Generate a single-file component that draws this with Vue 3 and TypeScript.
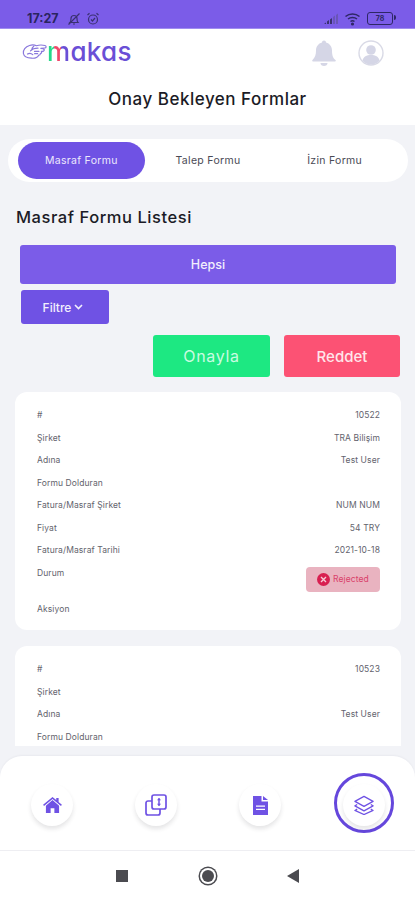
<script setup lang="ts">
interface Row { label: string; value?: string; status?: boolean }
const tabs = ['Masraf Formu', 'Talep Formu', 'İzin Formu']
const first: Row[] = [
  { label: '#', value: '10522' },
  { label: 'Şirket', value: 'TRA Bilişim' },
  { label: 'Adına', value: 'Test User' },
  { label: 'Formu Dolduran' },
  { label: 'Fatura/Masraf Şirket', value: 'NUM NUM' },
  { label: 'Fiyat', value: '54 TRY' },
  { label: 'Fatura/Masraf Tarihi', value: '2021-10-18' },
  { label: 'Durum', status: true },
  { label: 'Aksiyon' }
]
const second: Row[] = [
  { label: '#', value: '10523' },
  { label: 'Şirket' },
  { label: 'Adına', value: 'Test User' },
  { label: 'Formu Dolduran' }
]
const cards = [first, second]
</script>

<template>
  <div class="screen">
    <div class="status">
      <div class="status-left">
        <span class="time">17:27</span>
        <svg width="14" height="14" viewBox="0 0 14 14" fill="none" stroke="#3a3170" stroke-width="1.2">
          <path d="M3 10.5c1-1 1-2.500 1-4a3 3 0 0 1 6 0c0 1.500 0 3 1 4z" />
          <path d="M1.500 12.500 12.500 1.500M6 12h2" />
        </svg>
        <svg width="14" height="14" viewBox="0 0 14 14" fill="none" stroke="#3a3170" stroke-width="1.2">
          <circle cx="7" cy="7.500" r="4.500" />
          <path d="M5 7.500 6.500 9 9 6M1.500 3 3.500 1.300M12.500 3l-2-1.700" />
        </svg>
      </div>
      <div class="status-right">
        <svg width="16" height="12" viewBox="0 0 16 12">
          <path d="M1 11 3 9.500V11zM4 11V8.500L6 7v4zM7 11V6.500L9 5v6z" fill="#3a3170" />
          <path d="M10 11V4l2-1.500V11zM13 11V2l2-1.500V11z" fill="#6a55b8" />
        </svg>
        <svg width="18" height="14" viewBox="0 0 18 14" fill="none" stroke="#2e2766" stroke-width="1.500">
          <path d="M1.500 4.500c4-3.500 10-3.500 14 0M4 7c2.500-2 6.500-2 9 0M6.500 9.500c1-.8 3-.8 4 0" />
          <circle cx="8.500" cy="12" r=".8" fill="#2e2766" />
        </svg>
        <div class="battery"><span>78</span></div>
      </div>
    </div>

    <header class="header">
      <div class="brand-row">
        <div class="brand">
          <svg width="25" height="20" viewBox="0 0 25 20" fill="#fff" stroke="#8a78dc" stroke-width="1.200" stroke-linejoin="round" stroke-linecap="round">
            <path d="M7.500 2.500c2.500-.8 5-.6 7 .2 2.500-.8 6-.8 8.500-.2 1.500.4 1.500 2.400-.2 2.500l-4 .3c1.800.1 3.300.4 3.500 1.500.1 1.200-1.300 1.700-3 1.600.7.8.3 2-.9 2.300-.1.800-.7 1.400-1.700 1.500-1.200 2.300-4.200 3.300-7.200 3C5.500 15 2 13.800 1.400 10.500.8 7 3.500 3.700 7.500 2.500z" />
            <path d="M8.500 7.800c1.700-1.800 4.300-2.600 7.500-2.600M5.500 11c1.800-1.100 3.800-.8 5.300.6M11.800 3.200c-1.300.9-2 2.200-2.100 3.700M16.900 8.400h-4.400M15.600 10.700h-3" />
          </svg>
          <span class="wordmark"><span class="m">m</span>akas</span>
        </div>
        <div class="header-icons">
          <svg width="26" height="28" viewBox="0 0 26 28" fill="#d5d6e6">
            <path d="M13 1.500c1.200 0 2 .8 2 1.900 3.700 1 6 4 6 8.100 0 5 1 7.500 3.500 9.500.6.500.3 1.500-.5 1.500H2c-.8 0-1.100-1-.5-1.500C4 18.500 5 16 5 11.500c0-4.100 2.300-7.100 6-8.100 0-1.100.8-1.900 2-1.900z" />
            <path d="M9.500 24h7c0 1.800-1.500 3-3.500 3s-3.500-1.200-3.500-3z" />
          </svg>
          <svg width="26" height="26" viewBox="0 0 26 26">
            <circle cx="13" cy="13" r="12" fill="#fff" stroke="#d9dae6" stroke-width="1.400" />
            <circle cx="13" cy="10" r="4.800" fill="#d5d6e6" />
            <path d="M4.500 20.500c1-4 4-5.500 8.500-5.500s7.500 1.500 8.500 5.500C19.500 23.200 16.500 24.500 13 24.500s-6.500-1.300-8.500-4z" fill="#d5d6e6" />
          </svg>
        </div>
      </div>
      <h1 class="page-title">Onay Bekleyen Formlar</h1>
    </header>

    <main class="content">
      <nav class="tabs">
        <button v-for="(t, i) in tabs" :key="t" class="tab" :class="{ active: i === 0 }">{{ t }}</button>
      </nav>
      <h2 class="list-title">Masraf Formu Listesi</h2>
      <button class="all">Hepsi</button>
      <button class="filter">Filtre
        <svg width="9" height="6" viewBox="0 0 9 6" fill="none" stroke="#f2effd" stroke-width="1.600">
          <path d="M1 1l3.500 3.500L8 1" />
        </svg>
      </button>
      <div class="actions">
        <button class="act approve">Onayla</button>
        <button class="act reject">Reddet</button>
      </div>
      <section v-for="(card, c) in cards" :key="c" class="card">
        <div v-for="r in card" :key="r.label" class="row" :class="{ 'status-row': r.status }">
          <span class="lbl">{{ r.label }}</span>
          <span v-if="r.status" class="badge">
            <span class="badge-x">
              <svg width="7" height="7" viewBox="0 0 7 7" stroke="#f7c9d6" stroke-width="1.400"><path d="M1 1l5 5M6 1 1 6" /></svg>
            </span>
            Rejected
          </span>
          <span v-else-if="r.value" class="val">{{ r.value }}</span>
        </div>
      </section>
    </main>

    <div class="dock">
      <button class="dock-btn">
        <svg width="19" height="16" viewBox="0 0 20 17" fill="#6f52e4">
          <path d="M10 0 0 8.300l1 1.200L10 2l9 7.500 1-1.200-3.500-2.900V1h-2.500v2.300z" />
          <path d="M10 3.300 3 9.200V17h5v-5h4v5h5V9.200z" />
        </svg>
      </button>
      <button class="dock-btn">
        <svg width="22" height="22" viewBox="0 0 22 22" fill="none" stroke="#6f52e4" stroke-width="1.700">
          <rect x="7" y="1" width="14" height="14" rx="2" />
          <path d="M7 7H3a2 2 0 0 0-2 2v10a2 2 0 0 0 2 2h10a2 2 0 0 0 2-2v-4" />
          <path d="M14 4.500v7" stroke-width="1.500" />
          <path d="M14 3.800l2 2.500h-4zM14 12.200l2-2.500h-4z" fill="#6f52e4" stroke="none" />
        </svg>
      </button>
      <button class="dock-btn">
        <svg width="15" height="19" viewBox="0 0 15 19" fill="#6f52e4">
          <path d="M0 0h8.500v5.500H15V19H0zM10 0l5 4h-5z" />
          <path d="M3 9.500h9v1.300H3zM3 12.800h9v1.300H3z" fill="#fff" />
        </svg>
      </button>
      <div class="dock-active">
        <button class="dock-btn inner">
          <svg width="20" height="20" viewBox="0 0 22 22" fill="none" stroke="#6f52e4" stroke-width="1.400" stroke-linejoin="round">
            <path d="M11 1.500 21 7l-10 5.500L1 7z" />
            <path d="M3.500 10.500 1 12l10 5.500L21 12l-2.500-1.500" />
            <path d="M3.500 15.500 1 17l10 4.500L21 17l-2.500-1.500" />
          </svg>
        </button>
      </div>
    </div>

    <div class="navbar">
      <span class="nav-square"></span>
      <span class="nav-circle"></span>
      <span class="nav-back"></span>
    </div>
  </div>
</template>

<style scoped>
.screen {
  width: 415px;
  height: 900px;
  display: flex;
  flex-direction: column;
  overflow: hidden;
  background: #f2f3f7;
  font-family: Inter, "Open Sans", "Liberation Sans", sans-serif;
  color: #1d1d28;
}
button { font-family: inherit; border: none; padding: 0; }
.status {
  height: 29px;
  flex: none;
  background: #7b5ce8;
  border-bottom: 1px solid #a08df0;
  box-sizing: border-box;
  display: flex;
  justify-content: space-between;
  align-items: center;
  padding: 9px 22px 0 27px;
}
.status-left, .status-right { display: flex; align-items: center; gap: 5px; }
.time { font-size: 12.500px; font-weight: 700; color: #2a2460; margin-right: 3px; }
.battery {
  width: 24px;
  height: 11px;
  border: 1.500px solid #2e2766;
  border-radius: 3px;
  display: flex;
  align-items: center;
  justify-content: center;
  position: relative;
}
.battery::after {
  content: "";
  position: absolute;
  right: -4px;
  top: 2px;
  width: 2px;
  height: 5px;
  background: #2e2766;
  border-radius: 0 2px 2px 0;
}
.battery span { font-size: 7px; font-weight: 700; color: #2e2766; }
.header {
  flex: none;
  height: 96px;
  background: #fff;
  box-sizing: border-box;
  padding: 10px 31px 0 22px;
}
.brand-row { display: flex; justify-content: space-between; align-items: center; height: 28px; }
.brand { display: flex; align-items: center; }
.wordmark {
  font-feature-settings: "cv11";
  font-size: 26px;
  line-height: 28px;
  font-weight: 500;
  color: #6a4fd6;
  letter-spacing: 0.3px;
  margin-top: -2px;
}
.wordmark .m {
  background:
    linear-gradient(#f2c335, #f2c335) right bottom / 32% 18% no-repeat,
    linear-gradient(90deg, #25d98a 0 32%, #f0486a 32% 62%, #6a4fd6 62%);
  -webkit-background-clip: text;
  background-clip: text;
  color: transparent;
}
.header-icons { display: flex; align-items: center; gap: 21px; }
.page-title {
  margin: 20px 0 0 -22px;
  width: 415px;
  text-align: center;
  font-size: 17px;
  line-height: 24px;
  font-weight: 500;
  letter-spacing: .5px;
  color: #1b1b26;
}
.content {
  flex: 1;
  min-height: 0;
  overflow: hidden;
  display: flex;
  flex-direction: column;
  padding: 14px 14px 0 15px;
  margin-bottom: 10px;
}
.tabs {
  flex: none;
  margin: 0 -7px;
  height: 43px;
  background: #fff;
  border-radius: 22px;
  display: grid;
  grid-template-columns: repeat(3, 1fr);
  align-items: center;
  padding: 0 10px;
}
.tab {
  height: 37px;
  background: transparent;
  border-radius: 19px;
  font-size: 10.500px;
  letter-spacing: .3px;
  color: #4a4a55;
}
.tab.active { background: #6f52e4; color: #ece8fc; }
.list-title {
  flex: none;
  margin: 23px 0 0 1px;
  font-size: 16.500px;
  line-height: 24px;
  font-weight: 500;
  letter-spacing: .55px;
  color: #1b1b26;
}
.all {
  flex: none;
  margin: 16px 5px 0;
  width: 376px;
  height: 39px;
  background: #7b5ce8;
  border-radius: 3px;
  color: #f2effd;
  font-size: 12.500px;
  font-weight: 500;
}
.filter {
  flex: none;
  margin: 6px 0 0 6px;
  width: 88px;
  height: 34px;
  background: #6f52e4;
  border-radius: 3px;
  color: #f2effd;
  font-size: 12px;
  font-weight: 500;
  display: flex;
  align-items: center;
  justify-content: center;
  gap: 3px;
  padding-right: 4px;
  box-sizing: border-box;
}
.actions { flex: none; display: flex; justify-content: flex-end; gap: 14px; margin: 11px 1px 0 0; }
.act { height: 42px; border-radius: 3px; font-size: 15px; font-weight: 500; }
.approve { width: 117px; background: #1de882; color: #c9fbe0; font-size: 16px; letter-spacing: .7px; font-weight: 400; }
.reject { width: 116px; background: #fc5274; color: #ffe6ea; }
.card {
  flex: none;
  width: 386px;
  margin-top: 15px;
  background: #fff;
  border-radius: 12px;
  box-sizing: border-box;
  padding: 12px 21px 10px 22px;
}
.card + .card { margin-top: 16px; }
.row {
  display: flex;
  justify-content: space-between;
  align-items: flex-start;
  min-height: 22.500px;
  font-size: 8.500px;
  line-height: 22.500px;
  letter-spacing: .1px;
  color: #63636d;
}
.status-row { height: 36px; }
.badge {
  width: 74px;
  height: 25px;
  margin-top: 5px;
  border-radius: 4px;
  background: #e9b3c0;
  color: #d9406a;
  font-size: 8.500px;
  line-height: 25px;
  display: flex;
  align-items: center;
  justify-content: center;
  gap: 3px;
}
.badge-x {
  width: 13px;
  height: 13px;
  border-radius: 50%;
  background: #d81f50;
  display: flex;
  align-items: center;
  justify-content: center;
}
.dock {
  flex: none;
  height: 94px;
  background: #fff;
  border-radius: 22px 22px 0 0;
  box-shadow: 0 -1px 2px rgba(30, 30, 60, .04);
  display: grid;
  grid-template-columns: repeat(4, 104px);
  align-items: center;
  justify-items: center;
}
.dock-btn {
  width: 42px;
  height: 42px;
  margin-top: 4px;
  border-radius: 50%;
  background: #fff;
  box-shadow: 0 3px 4px rgba(40, 40, 50, .12);
  display: flex;
  align-items: center;
  justify-content: center;
}
.dock-active {
  width: 60px;
  height: 60px;
  box-sizing: border-box;
  border: 3px solid #6547dc;
  border-radius: 50%;
  display: flex;
  align-items: center;
  justify-content: center;
}
.navbar {
  flex: none;
  height: 50px;
  background: #fff;
  border-top: 1px solid #eeeef2;
  box-sizing: border-box;
  display: flex;
  align-items: center;
  padding-left: 116px;
}
.nav-square { width: 12px; height: 12px; background: #4b4b50; }
.nav-circle {
  width: 12px;
  height: 12px;
  margin-left: 74px;
  border-radius: 50%;
  background: #4b4b50;
  box-shadow: 0 0 0 2px #fff, 0 0 0 3.500px #4b4b50;
}
.nav-back {
  margin-left: 73px;
  width: 0;
  height: 0;
  border-style: solid;
  border-width: 7px 12px 7px 0;
  border-color: transparent #4b4b50 transparent transparent;
}
</style>
